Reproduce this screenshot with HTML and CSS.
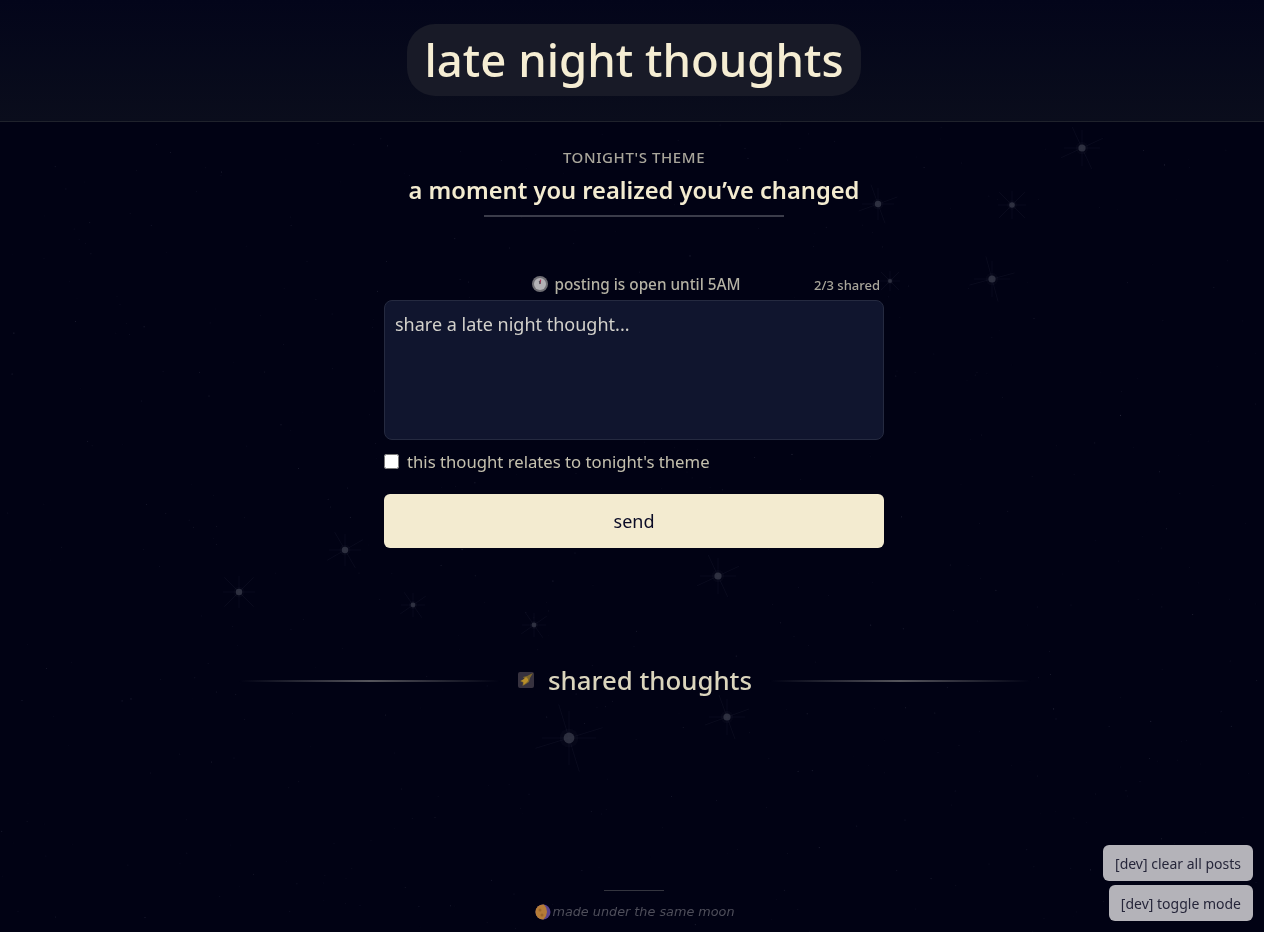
FILE: index.html
```html
<!DOCTYPE html>
<html lang="en">
<head>
    <meta charset="UTF-8">
    <meta name="viewport" content="width=device-width, initial-scale=1.0">
    <title>late night thoughts</title>
    <link rel="stylesheet" href="styles.css">
</head>
<body>

<svg id="sky" class="sky" width="1264" height="932" viewBox="0 0 1264 932" aria-hidden="true"></svg>

<header class="site-header">
    <h1 class="site-title">late night thoughts</h1>
</header>

<main class="container">
    <section class="theme">
        <p class="theme-label">Tonight's theme</p>
        <h2 class="theme-text">a moment you realized you’ve changed</h2>
        <div class="theme-rule"></div>
    </section>

    <form class="post-form">
        <div class="status-row">
            <span></span>
            <p class="status">
                <svg class="emoji" width="18" height="18" viewBox="0 0 18 18" aria-hidden="true">
                    <circle cx="9" cy="9" r="8" fill="#6f6e74"/>
                    <circle cx="9" cy="9" r="6" fill="#b3b2b6"/>
                    <path d="M9 9 L9.6 4.6" stroke="#a83c5c" stroke-width="1.3"/>
                    <path d="M9 9 L8.4 6" stroke="#55545c" stroke-width="1.3"/>
                </svg>
                posting is open until 5AM
            </p>
            <span class="counter">2/3 shared</span>
        </div>
        <textarea class="thought" placeholder="share a late night thought..."></textarea>
        <label class="theme-check">
            <input type="checkbox">
            this thought relates to tonight's theme
        </label>
        <button type="button" class="send">send</button>
    </form>

    <section class="shared">
        <div class="shared-line"></div>
        <h3 class="shared-title">
            <svg class="emoji" width="16" height="16" viewBox="0 0 16 16" aria-hidden="true">
                <rect width="16" height="16" rx="2" fill="#37323f"/>
                <path d="M15 1 L9 4 L5 5 L6.5 7 L2 9 L5 10.5 L4.5 14 L8 12 L11 10 L12 6 Z" fill="#7d672c"/>
                <path d="M8 5 L6 7 L3 9 L5.5 10 L5.5 13 L8 11 L10 9 L10 7 Z" fill="#b98f2a"/>
            </svg>
            shared thoughts
        </h3>
        <div class="shared-line"></div>
    </section>
</main>

<footer class="site-footer">
    <div class="footer-rule"></div>
    <p class="footer-text">
        <svg class="emoji" width="16" height="16" viewBox="0 0 16 16" aria-hidden="true">
            <circle cx="8" cy="8" r="7.5" fill="#5a4490"/>
            <path d="M9 .6 A7.5 7.5 0 1 0 8.5 15.5 A11 11 0 0 0 12 8 A11 11 0 0 0 9 .6 Z" fill="#b67c38"/>
            <circle cx="5" cy="6" r="1.5" fill="#9c662c"/>
            <circle cx="7" cy="11" r="1.5" fill="#9c662c"/>
        </svg>
        made under the same moon
    </p>
</footer>

<div class="dev-tools">
    <button type="button" class="dev-button">[dev] clear all posts</button>
    <button type="button" class="dev-button">[dev] toggle mode</button>
</div>

<script src="stars.js"></script>
</body>
</html>
```

FILE: styles.css
```css
* {
    box-sizing: border-box;
}
body {
    font-family: "Noto Sans", sans-serif;
    background-color: #010214;
    color: #f3ebd0;
    margin: 0;
    padding: 0 0 0 4px;
    height: 932px;
    overflow: hidden;
}
h1, h2, h3, p {
    margin: 0;
    font-weight: 400;
}
.sky {
    position: fixed;
    top: 0;
    left: 0;
    z-index: -1;
}
.site-header {
    display: flex;
    justify-content: center;
    height: 122px;
    margin-left: -4px;
    padding: 24px 0 0 4px;
    background: linear-gradient(to bottom, #03051a, #0a0d1c);
    border-bottom: 1px solid #1f222c;
}
.site-title {
    height: 72px;
    width: 454px;
    font-size: 45.5px;
    line-height: 70px;
    font-weight: 500;
    text-align: center;
    color: #f5edd3;
    background-color: #181a27;
    border-radius: 28px;
}
.container {
    width: 500px;
    margin: 0 auto;
}
.theme {
    display: flex;
    flex-direction: column;
    align-items: center;
    padding-top: 26px;
}
.theme-label {
    font-size: 15px;
    line-height: 18px;
    font-weight: 500;
    letter-spacing: 0.6px;
    text-transform: uppercase;
    color: #a9a69b;
}
.theme-text {
    margin-top: 8px;
    font-size: 23.7px;
    line-height: 32px;
    font-weight: 600;
    white-space: nowrap;
    color: #f3ebd0;
}
.theme-rule {
    width: 300px;
    height: 2px;
    margin-top: 9px;
    background-color: #3b3c4a;
}
.post-form {
    margin-top: 56px;
}
.status-row {
    display: grid;
    grid-template-columns: 1fr auto 1fr;
    align-items: center;
    height: 16px;
    margin-bottom: 11px;
}
.status {
    display: flex;
    align-items: center;
    gap: 5px;
    padding-left: 4px;
    font-size: 15.3px;
    font-weight: 500;
    color: #b5b2a4;
}
.counter {
    margin-top: 3px;
    padding-right: 4px;
    font-size: 13px;
    font-weight: 500;
    text-align: right;
    color: #a9a69b;
}
.thought {
    display: block;
    width: 100%;
    height: 140px;
    padding: 11px 10px;
    font-family: inherit;
    font-size: 18px;
    line-height: 24px;
    color: #f3ebd0;
    background-color: #10152e;
    border: 1px solid #252a40;
    border-radius: 8px;
    resize: none;
}
.thought::placeholder {
    color: #d3d1cb;
    opacity: 1;
}
.theme-check {
    display: flex;
    align-items: center;
    gap: 8px;
    height: 20px;
    margin-top: 11px;
    font-size: 16.7px;
    color: #c4c0ae;
}
.theme-check input {
    width: 15px;
    height: 15px;
    margin: 0;
}
.send {
    display: block;
    width: 100%;
    height: 54px;
    margin-top: 23px;
    padding-bottom: 2px;
    font-family: inherit;
    font-size: 18px;
    color: #0a0b26;
    background-color: #f3ebd0;
    border: none;
    border-radius: 6px;
}
.shared {
    display: flex;
    align-items: center;
    justify-content: center;
    gap: 18px;
    width: 792px;
    margin: 116px 0 0 -145px;
}
.shared-title {
    display: flex;
    align-items: center;
    gap: 14px;
    flex: none;
    padding-bottom: 2px;
    font-size: 25.8px;
    line-height: 32px;
    font-weight: 500;
    color: #dbd5bd;
}
.shared-line {
    flex: 1;
    height: 2px;
    background: linear-gradient(to right, transparent, #55555c, transparent);
}
.site-footer {
    position: fixed;
    left: 6px;
    right: 0;
    bottom: 12px;
    display: flex;
    flex-direction: column;
    align-items: center;
}
.footer-rule {
    width: 60px;
    height: 1px;
    margin: 0 0 13px -2px;
    background-color: #34353f;
}
.footer-text {
    display: flex;
    align-items: center;
    gap: 1px;
    font-family: "DejaVu Sans", sans-serif;
    font-size: 12.8px;
    line-height: 16px;
    font-style: italic;
    color: #4e4e5a;
}
.emoji {
    flex: none;
}
.dev-tools {
    position: fixed;
    right: 11px;
    bottom: 11px;
    display: flex;
    flex-direction: column;
    align-items: flex-end;
    gap: 4px;
}
.dev-button {
    height: 36px;
    padding: 0 12px;
    font-family: inherit;
    font-size: 14px;
    color: #26263a;
    background-color: #b4b3b9;
    border: none;
    border-radius: 6px;
}
```

FILE: stars.js
```js
// sky: bright stars have fixed places, the small dust is seeded so it stays the same
const sky = document.getElementById('sky');
const ns = 'http://www.w3.org/2000/svg';

const brightStars = [
    [1082, 148, 0.9, 20], [878, 204, 0.8, 25], [1012, 205, 0.7, 0], [890, 281, 0.5, 0],
    [992, 279, 0.9, 30], [345, 550, 0.8, 15], [239, 592, 0.8, 0], [413, 605, 0.6, 10],
    [718, 576, 0.9, 20], [534, 625, 0.6, 10], [727, 717, 0.9, 25], [569, 738, 1.35, 28]
];

let seed = 4711;
function rand() {
    seed = (seed * 16807) % 2147483647;
    return seed / 2147483647;
}

function add(name, attrs) {
    const el = document.createElementNS(ns, name);
    Object.entries(attrs).forEach(([key, value]) => el.setAttribute(key, value));
    sky.appendChild(el);
}

for (let i = 0; i < 520; i++) {
    add('circle', {
        cx: (rand() * 1264).toFixed(1),
        cy: (122 + rand() * 810).toFixed(1),
        r: (0.3 + rand() * 0.3).toFixed(2),
        fill: '#8b8da0',
        opacity: (0.08 + rand() * 0.2).toFixed(2)
    });
}

brightStars.forEach(([x, y, size, turn]) => {
    for (let a = 0; a < 8; a++) {
        const angle = (a * 45 + (a % 2 ? turn : 0)) * Math.PI / 180;
        const reach = (a % 2 ? 26 : 20) * size;
        add('line', {
            x1: x, y1: y,
            x2: (x + Math.cos(angle) * reach).toFixed(1),
            y2: (y + Math.sin(angle) * reach).toFixed(1),
            stroke: '#6d6f86',
            'stroke-width': 0.6,
            opacity: 0.14
        });
    }
    add('circle', { cx: x, cy: y, r: 7 * size, fill: '#55576a', opacity: 0.06 });
    add('circle', { cx: x, cy: y, r: 4 * size, fill: '#343646', opacity: 0.85 });
});
```
